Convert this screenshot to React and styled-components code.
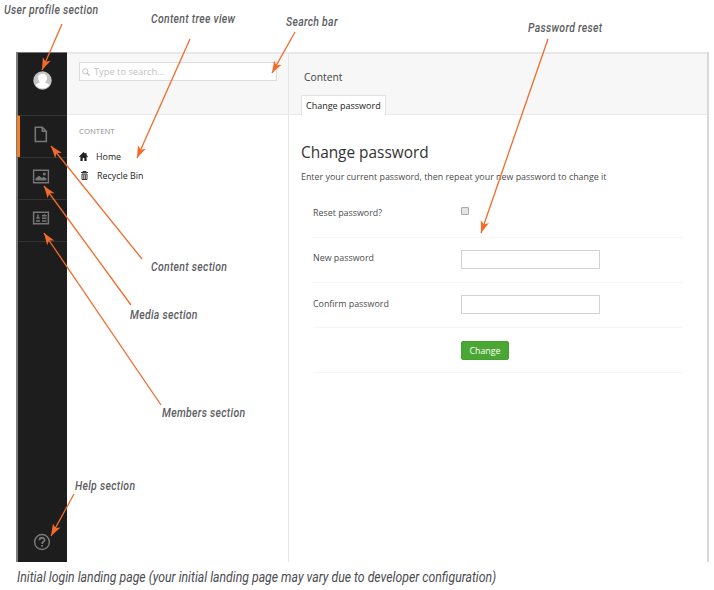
import React from "react";
import styled, { createGlobalStyle } from "styled-components";

const Global = createGlobalStyle`
  * { box-sizing: border-box; }
  body { margin: 0; background: #fff; overflow: hidden; }
  h1, p { margin: 0; font-weight: 400; }
`;

const Page = styled.main`
  position: relative;
  width: 714px;
  height: 590px;
  padding: 52px 0 0 16px;
  font-family: "Open Sans", sans-serif;
  color: #444;
`;

const Window = styled.div`
  display: grid;
  grid-template-columns: 51px 222px 1fr;
  width: 693px;
  height: 510px;
  border-right: 2px solid #d9d9d9;
`;

const Sidebar = styled.nav`
  display: flex;
  flex-direction: column;
  background: #1d1d1d;
  border-left: 2px solid #7c7c7c;
  border-top: 1px solid #777;
  color: #777;
`;

const Profile = styled.div`
  display: flex;
  justify-content: center;
  height: 62px;
  padding: 18px 1px 0 0;
`;

const Section = styled.div`
  height: 42px;
  margin-left: -1px;
  padding: 9px 0 0 12px;
  border-top: 1px solid #333;
  border-left: 3px solid ${(p) => (p.$active ? "#f5821f" : "transparent")};
`;

const SectionEnd = styled.div`
  flex: 1;
  display: flex;
  align-items: flex-end;
  border-top: 1px solid #333;
  padding: 0 0 11px 15px;
`;

const Icon = styled.svg`
  display: block;
  flex: none;
  width: ${(p) => p.$size}px;
  height: ${(p) => p.$size}px;
`;

const Tree = styled.section`
  border-right: 1px solid #e6e6e6;
  color: #222;
`;

const Header = styled.header`
  height: 63px;
  background: #f7f7f7;
  border-top: 2px solid #e8e8e8;
  border-bottom: 1px solid #e9e9e9;
  padding: ${(p) => p.$pad};
`;

const Search = styled.div`
  display: flex;
  align-items: center;
  gap: 4px;
  width: 198px;
  height: 19px;
  padding-left: 2px;
  border: 1px solid #dcdcdc;
  background: #fff;
  color: #c2c2c2;
  font-size: 9.3px;
`;

const TreeTitle = styled.div`
  margin: 10px 0 10px 12px;
  font-size: 7.8px;
  line-height: 12px;
  color: #8e8e8e;
`;

const TreeItem = styled.div`
  display: flex;
  align-items: center;
  gap: ${(p) => p.$gap}px;
  height: 19px;
  padding-left: ${(p) => p.$indent}px;
  font-size: 8.9px;
`;

const Editor = styled.section`
  display: flex;
  flex-direction: column;
`;

const Crumb = styled.div`
  padding-left: 3px;
  font-size: 10.3px;
  line-height: 14px;
  color: #444;
`;

const Tab = styled.div`
  width: 85px;
  height: 20px;
  margin-top: 11px;
  border: 1px solid #e2e2e2;
  border-bottom: 0;
  background: #fff;
  padding-left: 4px;
  font-size: 9px;
  line-height: 19px;
  color: #222;
  white-space: nowrap;
`;

const Title = styled.h1`
  margin: 28px 0 0 12px;
  font-size: 15.4px;
  line-height: 20px;
  color: #333;
`;

const Intro = styled.p`
  margin: 7px 0 0 12px;
  font-size: 8.9px;
  line-height: 13px;
  color: #4c4c4c;
`;

const Form = styled.div`
  width: 370px;
  margin: 9px 0 0 24px;
`;

const Field = styled.div`
  display: grid;
  grid-template-columns: 148px 1fr;
  height: ${(p) => p.$h}px;
  padding-top: ${(p) => p.$top}px;
  border-bottom: 1px solid #f6f6f6;
  font-size: 8.9px;
  line-height: 12px;
  color: #4c4c4c;
`;

const FieldLabel = styled.span`
  padding-top: ${(p) => p.$drop || 0}px;
`;

const Checkbox = styled.span`
  width: 8px;
  height: 8px;
  border: 1px solid #aaa;
  border-radius: 1px;
  background: #e5e5e5;
`;

const Input = styled.span`
  width: 139px;
  height: 19px;
  border: 1px solid #d4d4d4;
`;

const Button = styled.button`
  grid-column: 2;
  width: 48px;
  height: 19px;
  padding: 0;
  border: 1px solid #479f30;
  border-radius: 2px;
  background: #4aa733;
  color: #fff;
  font: 8.9px/17px "Open Sans", sans-serif;
`;

const Caption = styled.p`
  margin: 7px 0 0 1px;
  font: italic 400 14px/17px Roboto, sans-serif;
  color: #4a4b50;
  white-space: nowrap;
  transform: scaleX(${(p) => p.$scale});
  transform-origin: left;
`;

const Label = styled.span`
  position: absolute;
  left: ${(p) => p.$x}px;
  top: ${(p) => p.$y}px;
  font: italic 500 12px/14px Roboto, sans-serif;
  letter-spacing: 0.35px;
  color: #5c5d62;
  white-space: nowrap;
  transform: scaleX(0.87);
  transform-origin: left;
`;

const Arrows = styled.svg`
  position: absolute;
  inset: 0;
  width: 714px;
  height: 590px;
  pointer-events: none;
`;

const labels = [
  ["User profile section", 4, 3],
  ["Content tree view", 151, 12],
  ["Search bar", 286, 15],
  ["Password reset", 528, 21],
  ["Content section", 151, 260],
  ["Media section", 130, 308],
  ["Members section", 162, 406],
  ["Help section", 75, 479],
];

const arrows = [
  [62, 24, 42, 70],
  [190, 39, 137, 158],
  [295, 32, 272, 73],
  [548, 39, 481, 233],
  [142, 259, 51, 146],
  [131, 305, 44, 186],
  [161, 405, 44, 233],
  [74, 494, 51, 536],
];

function Arrow({ line: [x1, y1, x2, y2] }) {
  const angle = (Math.atan2(y2 - y1, x2 - x1) * 180) / Math.PI;
  return (
    <g stroke="#f26b2b" fill="#f26b2b">
      <line x1={x1} y1={y1} x2={x2} y2={y2} strokeWidth="1.3" />
      <path d="M0 0L-12 -4.3L-9 0L-12 4.3Z" stroke="none" transform={`translate(${x2} ${y2}) rotate(${angle})`} />
    </g>
  );
}

export default function App() {
  return (
    <Page>
      <Global />
      <Window>
        <Sidebar>
          <Profile>
            <Icon $size={19} viewBox="0 0 19 19">
              <circle cx="9.5" cy="9.5" r="9.2" fill="#c4c4c4" />
              <path d="M9.5 2.8c-2.9 0-4.5 1.8-4.5 4.3 0 1.8.7 3 1.900 4-.5 1.300-3.300 1-4.200 3.500a9.200 9.200 0 0 0 13.600 0c-.9-2.500-3.700-2.200-4.200-3.500 1.200-1 1.900-2.200 1.900-4 0-2.500-1.600-4.300-4.500-4.300Z" fill="#fff" />
            </Icon>
          </Profile>
          <Section $active>
            <Icon $size={18} viewBox="0 0 18 18" fill="none" stroke="currentColor" strokeWidth="1.6">
              <path d="M3.300 2.300h7l4 4v10.200h-11ZM10.300 2.300v4h4" />
            </Icon>
          </Section>
          <Section>
            <Icon $size={18} viewBox="0 0 18 18" fill="none" stroke="currentColor" strokeWidth="1.4">
              <path d="M1.600 3.300h14.800v12.400H1.600Z" />
              <path d="M3.500 13.500v-2L7 8.800l3 2.200 1.500-1.200 3 1.700v2Z" fill="currentColor" stroke="none" />
              <circle cx="12.300" cy="7" r="1.500" fill="currentColor" stroke="none" />
            </Icon>
          </Section>
          <Section>
            <Icon $size={18} viewBox="0 0 18 18" fill="none" stroke="currentColor" strokeWidth="1.500">
              <path d="M1.600 3.300h14.800v11.400H1.600ZM4 11.900h4M5.900 5.500v3.500M4.300 9h3.400M10 6.700h4.600M10 9.200h4.600M10 11.900h4.600M12.300 5.200v1.500" />
            </Icon>
          </Section>
          <SectionEnd>
            <Icon $size={18} viewBox="0 0 18 18" fill="none" stroke="currentColor" strokeWidth="1.500">
              <circle cx="9" cy="9" r="7.400" />
              <path d="M6.400 7.300c.1-3.500 5.300-3.200 5.200-.3 0 1.800-2.500 1.800-2.500 3.900M9.100 12v1.700" strokeWidth="1.800" />
            </Icon>
          </SectionEnd>
        </Sidebar>
        <Tree>
          <Header $pad="8px 0 0 12px">
            <Search>
              <Icon $size={8} viewBox="0 0 8 8" fill="none" stroke="currentColor">
                <circle cx="3.300" cy="3.300" r="2.600" />
                <path d="m5.200 5.200 2.300 2.300" strokeWidth="1.300" />
              </Icon>
              Type to search...
            </Search>
          </Header>
          <TreeTitle>CONTENT</TreeTitle>
          <TreeItem $indent={12} $gap={8}>
            <Icon $size={9} viewBox="0 0 9 9" fill="#222">
              <path d="M4.500 0 0 4.500l.7.700L1.400 4.600V9h2.300V6h1.600v3h2.300V4.600l.7.600.7-.700L7.500 3V1H6.300v.8Z" />
            </Icon>
            Home
          </TreeItem>
          <TreeItem $indent={13} $gap={8}>
            <Icon $size={9} viewBox="0 0 9 9" fill="none" stroke="#222">
              <path d="M1 1.500h7M3 1.500V.5h3v1M2 3v5.500h5V3ZM3.800 3.500v4.500M5.300 3.500v4.500" strokeWidth="0.9" />
            </Icon>
            Recycle Bin
          </TreeItem>
        </Tree>
        <Editor>
          <Header $pad="16px 0 0 12px">
            <Crumb>Content</Crumb>
            <Tab>Change password</Tab>
          </Header>
          <Title>Change password</Title>
          <Intro>Enter your current password, then repeat your new password to change it</Intro>
          <Form>
            <Field $h={46} $top={15}>
              <FieldLabel>Reset password?</FieldLabel>
              <Checkbox />
            </Field>
            <Field $h={45} $top={12}>
              <FieldLabel $drop={2}>New password</FieldLabel>
              <Input />
            </Field>
            <Field $h={45} $top={12}>
              <FieldLabel $drop={3}>Confirm password</FieldLabel>
              <Input />
            </Field>
            <Field $h={45} $top={13}>
              <Button>Change</Button>
            </Field>
          </Form>
        </Editor>
      </Window>
      <Caption $scale={0.876}>Initial login landing page (your initial landing page may vary due to developer configuration)</Caption>
      {labels.map(([text, x, y]) => (
        <Label key={text} $x={x} $y={y}>{text}</Label>
      ))}
      <Arrows viewBox="0 0 714 590">
        {arrows.map((line) => (
          <Arrow key={line.join()} line={line} />
        ))}
      </Arrows>
    </Page>
  );
}
